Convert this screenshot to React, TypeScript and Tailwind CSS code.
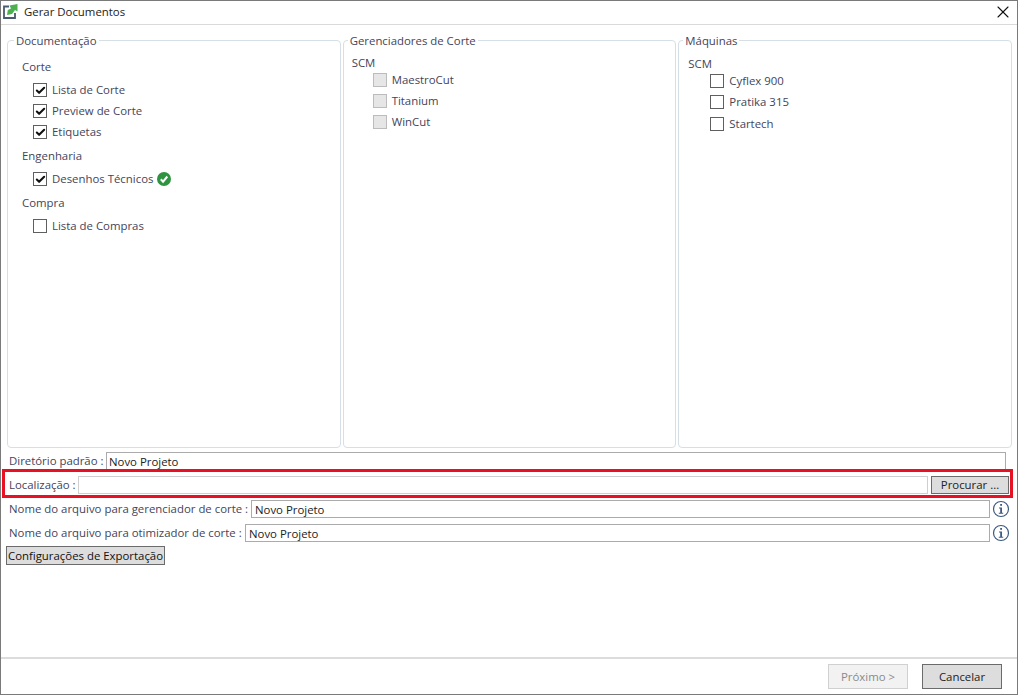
import { ReactNode } from 'react';
import { Check, X } from 'lucide-react';

function CheckRow({ label, checked, disabled, children, className }: { label: string; checked?: boolean; disabled?: boolean; children?: ReactNode; className?: string }) {
    return (
        <div className={`flex items-center h-5 ${className ?? ''}`}>
            <span className={`w-[14px] h-[14px] flex items-center justify-center border ${disabled ? 'bg-[#e6e6e6] border-[#bcbcbc]' : 'bg-white border-[#5f5f5f]'}`}>
                {checked && <Check className="w-[11px] h-[11px] text-[#111]" strokeWidth={4.5} />}
            </span>
            <span className="ml-[5px] text-[#44445a]">{label}</span>
            {children}
        </div>
    );
}

function Field({ label, width }: { label: string; width: string }) {
    return (
        <div className="flex items-center h-[18px] mt-1.5 pl-[8px]">
            <span className="whitespace-nowrap text-[#44445a] flex-1">{label}</span>
            <div className={`${width} h-[18px] border border-[#ababab] pl-[3px] leading-[17px] text-[#222] bg-white`}>Novo Projeto</div>
            <svg viewBox="0 0 18 18" className="w-[18px] h-[18px] ml-[2px] mr-[2px]">
                <circle cx="9" cy="9" r="7.5" fill="none" stroke="#3d5a80" strokeWidth="1.2" />
                <rect x="8.2" y="4" width="1.8" height="1.8" fill="#3d5a80" />
                <path d="M7 7.5h3v5.2h1.2v1H6.8v-1H8.200V8.500H7z" fill="#3d5a80" />
            </svg>
        </div>
    );
}

export default function App() {
    return (
        <div className="w-[1018px] h-[695px] flex flex-col bg-white border border-[#7a7a7a] text-[11.4px] font-['Open_Sans',sans-serif] overflow-hidden">
            {/* Title bar */}
            <div className="h-[24px] shrink-0 flex items-center border-b border-[#dadada] pl-[2px] pr-[4px] pb-[2px]">
                <svg viewBox="0 0 15 15" className="w-[15px] h-[15px]">
                    <path d="M6 2.500H1v11.500h11V9" fill="none" stroke="#4a5a70" strokeWidth="1.800" />
                    <path d="M4 11l.8-5L8 4.500 6.500 1.500 14.500 0v7.500L12 6 9 10z" fill="#4caf50" />
                </svg>
                <span className="ml-[6px] text-[#222]">Gerar Documentos</span>
                <X className="w-[20px] h-[20px] ml-auto text-[#111]" strokeWidth={1.3} />
            </div>

            <div className="flex-1 flex flex-col pl-[6px] pr-[5px] pt-[7px]">
                <div className="grid grid-cols-3 gap-[2px] h-[416px] shrink-0">
                    <fieldset className="border border-[#d5dfe5] rounded-[4px]">
                        <legend className="ml-[6px] px-[2px] h-4 leading-[18px] text-[#44445a]">Documentação</legend>
                        <div className="pl-[14px]">
                            <div className="mt-[11px] h-4 leading-4 text-[#44445a]">Corte</div>
                            <div className="mt-[5px] ml-[11px] flex flex-col gap-px">
                                <CheckRow label="Lista de Corte" checked />
                                <CheckRow label="Preview de Corte" checked />
                                <CheckRow label="Etiquetas" checked />
                            </div>
                            <div className="mt-[6px] h-4 leading-4 text-[#44445a]">Engenharia</div>
                            <CheckRow label="Desenhos Técnicos" checked className="mt-[5px] ml-[11px]">
                                <svg viewBox="0 0 14 14" className="w-[14px] h-[14px] ml-[4px]">
                                    <circle cx="7" cy="7" r="7" fill="#2e9440" />
                                    <path d="M3.800 7.200l2.300 2.500 4.200-5.200" fill="none" stroke="#fff" strokeWidth="2" />
                                </svg>
                            </CheckRow>
                            <div className="mt-[6px] h-4 leading-4 text-[#44445a]">Compra</div>
                            <CheckRow label="Lista de Compras" className="mt-[5px] ml-[11px]" />
                        </div>
                    </fieldset>

                    <fieldset className="border border-[#d5dfe5] rounded-[4px]">
                        <legend className="ml-[4px] px-[2px] h-4 leading-[18px] text-[#44445a]">Gerenciadores de Corte</legend>
                        <div className="pl-[8px]">
                            <div className="mt-[7px] h-4 leading-4 text-[#44445a]">SCM</div>
                            <div className="-mt-px ml-[21px] flex flex-col gap-px">
                                <CheckRow label="MaestroCut" disabled />
                                <CheckRow label="Titanium" disabled />
                                <CheckRow label="WinCut" disabled />
                            </div>
                        </div>
                    </fieldset>

                    <fieldset className="border border-[#d5dfe5] rounded-[4px]">
                        <legend className="ml-[4px] px-[2px] h-4 leading-[18px] text-[#44445a]">Máquinas</legend>
                        <div className="pl-[9px]">
                            <div className="mt-[8px] h-4 leading-4 text-[#44445a]">SCM</div>
                            <div className="-mt-px ml-[22px] flex flex-col gap-px">
                                <CheckRow label="Cyflex 900" />
                                <CheckRow label="Pratika 315" />
                                <CheckRow label="Startech" className="mt-px" />
                            </div>
                        </div>
                    </fieldset>
                </div>

                {/* Paths */}
                <div className="flex items-center h-[18px] mt-[4px] pl-[2px]">
                    <span className="text-[#44445a] w-[97px] whitespace-nowrap">Diretório padrão :</span>
                    <div className="w-[900px] h-[18px] border border-[#ababab] pl-[2px] leading-[18px] text-[#222]">Novo Projeto</div>
                </div>
                <div className="relative -mt-px -ml-[5px] mr-[-1px] h-[29px] shrink-0 flex items-start border-[3px] border-[#e81123] pl-[4px] pr-px pt-[4px]">
                    <span className="text-[#44445a] w-[69px] h-[18px] leading-[18px] whitespace-nowrap">Localização :</span>
                    <div className="w-[850px] h-[18px] border border-[#cfcfcf] bg-white" />
                    <div className="ml-[3px] w-[78px] h-[18px] border border-[#6b6b6b] bg-[#dddddd] flex items-center justify-center text-[#222]">Procurar ...</div>
                </div>
                <div className="-mt-[4px] -ml-[6px]">
                    <Field label="Nome do arquivo para gerenciador de corte :" width="w-[739px]" />
                    <Field label="Nome do arquivo para otimizador de corte :" width="w-[745px]" />
                </div>
                <div className="mt-[4px] w-[159px] -ml-px h-[19px] border border-[#6b6b6b] bg-[#dddddd] flex items-center justify-center text-[#111] whitespace-nowrap">Configurações de Exportação</div>
            </div>

            {/* Footer */}
            <div className="h-[37px] shrink-0 border-t-2 border-[#dcdcdc] flex justify-end items-start pt-[5px] pr-[15px] gap-[14px]">
                <div className="w-[80px] h-[25px] border border-[#d0d0d0] bg-[#f2f2f2] flex items-center justify-center text-[#8a8a8a]">Próximo &gt;</div>
                <div className="w-[80px] h-[25px] border border-[#6b6b6b] bg-[#dddddd] flex items-center justify-center text-[#222]">Cancelar</div>
            </div>
        </div>
    );
}
